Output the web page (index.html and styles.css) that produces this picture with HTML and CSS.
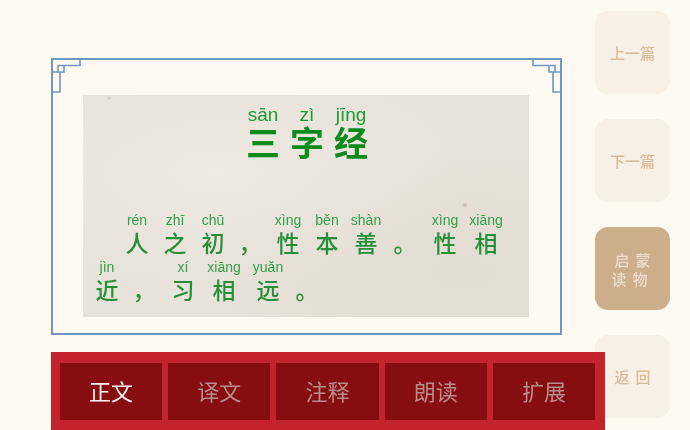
FILE: index.html
```html
<!DOCTYPE html>
<html lang="zh-CN">
<head>
<meta charset="utf-8">
<title>三字经</title>
<link rel="stylesheet" href="styles.css">
</head>
<body>
<div class="page">
  <main class="main">
    <section class="frame">
      <svg class="corner corner-left" viewBox="0 0 30 36" aria-hidden="true"><path d="M29 1V7.5H7V14M13 8V14H1M9 14V34H1"/></svg>
      <svg class="corner corner-right" viewBox="0 0 30 36" aria-hidden="true"><path d="M29 1V7.5H7V14M13 8V14H1M9 14V34H1"/></svg>
      <article class="paper">
        <h1 class="title">
          <span class="tcell"><span class="tpy">sān</span><span class="thz">三</span></span>
          <span class="tcell"><span class="tpy">zì</span><span class="thz">字</span></span>
          <span class="tcell"><span class="tpy">jīng</span><span class="thz">经</span></span>
        </h1>
        <div class="line line-first">
          <span class="cell w38"><span class="py">rén</span><span class="hz">人</span></span>
          <span class="cell w38"><span class="py">zhī</span><span class="hz">之</span></span>
          <span class="cell w38"><span class="py">chū</span><span class="hz">初</span></span>
          <span class="cell w36"><span class="py">&nbsp;</span><span class="hz">，</span></span>
          <span class="cell w40"><span class="py">xìng</span><span class="hz">性</span></span>
          <span class="cell w38"><span class="py">běn</span><span class="hz">本</span></span>
          <span class="cell w40"><span class="py">shàn</span><span class="hz">善</span></span>
          <span class="cell w38"><span class="py">&nbsp;</span><span class="hz">。</span></span>
          <span class="cell w42"><span class="py">xìng</span><span class="hz">性</span></span>
          <span class="cell w40"><span class="py">xiāng</span><span class="hz">相</span></span>
        </div>
        <div class="line line-second">
          <span class="cell w38"><span class="py">jìn</span><span class="hz">近</span></span>
          <span class="cell w36"><span class="py">&nbsp;</span><span class="hz">，</span></span>
          <span class="cell w42"><span class="py">xí</span><span class="hz">习</span></span>
          <span class="cell w40"><span class="py">xiāng</span><span class="hz">相</span></span>
          <span class="cell w48"><span class="py">yuǎn</span><span class="hz">远</span></span>
          <span class="cell w30"><span class="py">&nbsp;</span><span class="hz">。</span></span>
        </div>
      </article>
    </section>
    <nav class="tabs">
      <a class="tab tab-active">正文</a>
      <a class="tab">译文</a>
      <a class="tab">注释</a>
      <a class="tab">朗读</a>
      <a class="tab">扩展</a>
    </nav>
  </main>
  <aside class="side">
    <a class="side-btn">上一篇</a>
    <a class="side-btn">下一篇</a>
    <a class="side-btn side-active">启蒙<br>读物</a>
    <a class="side-btn side-back">返回</a>
  </aside>
</div>
</body>
</html>
```
FILE: styles.css
```css
* { box-sizing: border-box; }
html, body { margin: 0; height: 100%; }
body {
  background: #fffaf1;
  font-family: "Noto Sans CJK SC", "Liberation Sans", sans-serif;
  overflow: hidden;
}
.page {
  display: flex;
  width: 690px;
  height: 430px;
  padding-left: 51px;
}
.main {
  width: 511px;
  padding-top: 58px;
  flex: none;
}
.frame {
  position: relative;
  width: 511px;
  height: 277px;
  border: 2px solid #6f97bf;
  padding: 35px 0 0 30px;
}
.corner {
  position: absolute;
  top: -2px;
  width: 30px;
  height: 36px;
  fill: none;
  stroke: #6f97bf;
  stroke-width: 1.6;
}
.corner-left { left: -2px; }
.corner-right { right: -2px; transform: scaleX(-1); }
.paper {
  width: 446px;
  height: 222px;
  background-color: #e8e3da;
  background-image:
    radial-gradient(circle at 382px 110px, rgba(190,130,120,.55) 0, rgba(190,130,120,0) 3px),
    radial-gradient(circle at 26px 3px, rgba(170,160,150,.5) 0, rgba(170,160,150,0) 2px),
    radial-gradient(ellipse at 30% 35%, rgba(240,236,228,.7) 0, rgba(240,236,228,0) 55%),
    radial-gradient(ellipse at 85% 80%, rgba(222,214,204,.6) 0, rgba(222,214,204,0) 50%);
  overflow: hidden;
}
.title {
  display: flex;
  margin: 0;
  padding: 9px 0 0 158px;
  font-weight: 700;
  filter: blur(.3px);
}
.tcell {
  display: flex;
  flex-direction: column;
  align-items: center;
  width: 44px;
}
.tpy {
  font: 400 19px/22px "Liberation Sans", sans-serif;
  color: #1f9a35;
}
.thz {
  font-size: 34px;
  line-height: 32px;
  color: #0f8a1c;
}
.line {
  display: flex;
  filter: blur(.3px);
}
.line-first {
  margin-top: 54px;
  padding-left: 35px;
}
.line-second {
  margin-top: 3px;
  padding-left: 5px;
}
.cell {
  display: flex;
  flex-direction: column;
  align-items: center;
  flex: none;
}
.py {
  font: 400 14px/16px "Liberation Sans", sans-serif;
  color: #34a04a;
  white-space: nowrap;
}
.hz {
  font-size: 23px;
  font-weight: 500;
  line-height: 28px;
  color: #268f38;
}
.w30 { width: 30px; }
.w36 { width: 36px; }
.w38 { width: 38px; }
.w40 { width: 40px; }
.w42 { width: 42px; }
.w48 { width: 48px; }
.tabs {
  position: relative;
  z-index: 1;
  display: flex;
  gap: 6px;
  width: 554px;
  height: 78px;
  margin-top: 17px;
  padding: 11px 10px 10px 9px;
  background: #c3232c;
}
.tab {
  flex: 1;
  display: flex;
  align-items: center;
  justify-content: center;
  padding-bottom: 4px;
  background: #860d10;
  color: #b98c8c;
  font-size: 22px;
  filter: blur(.2px);
}
.tab-active { color: #fdf0ec; }
.side {
  flex: none;
  display: flex;
  flex-direction: column;
  gap: 25px;
  width: 75px;
  margin-left: 33px;
  padding-top: 11px;
}
.side-btn {
  display: flex;
  align-items: center;
  justify-content: center;
  height: 83px;
  border-radius: 13px;
  background: #f8efe5;
  color: #dabb9a;
  font-size: 15px;
  font-weight: 500;
  line-height: 19px;
  text-align: center;
  filter: blur(.2px);
}
.side-active {
  background: #cdae8a;
  color: #ecdccb;
  letter-spacing: 6px;
  text-indent: 6px;
}
.side-back {
  letter-spacing: 6px;
  text-indent: 6px;
}
```
